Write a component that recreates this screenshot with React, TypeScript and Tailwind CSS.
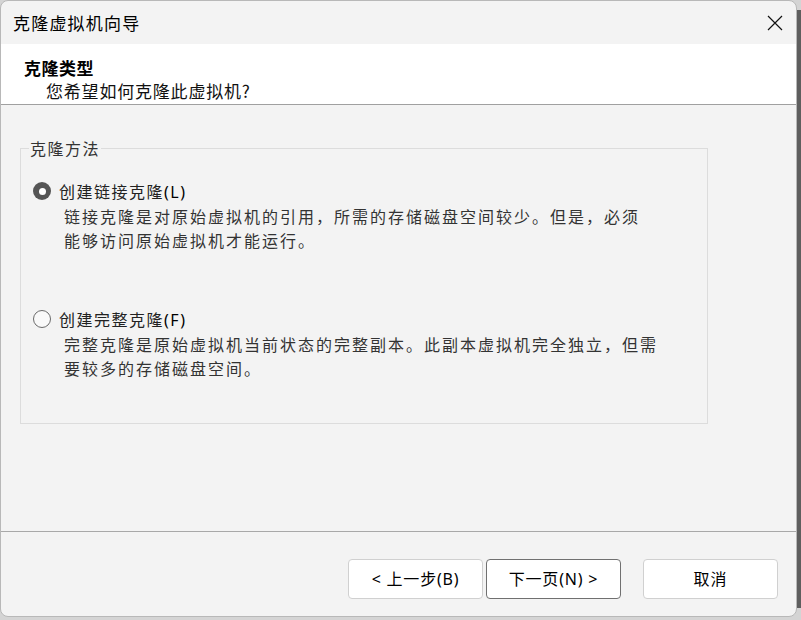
import React from "react";

const ui = { fontFamily: '"Noto Sans", "Noto Sans CJK SC", sans-serif' };
const cjk = { fontFamily: '"Noto Sans CJK SC", sans-serif' };

function Radio({ checked }: { checked: boolean }) {
  return checked ? (
    <span className="flex h-[18px] w-[18px] shrink-0 items-center justify-center rounded-full bg-[#555555]">
      <span className="h-[7px] w-[7px] rounded-full bg-white" />
    </span>
  ) : (
    <span className="h-[18px] w-[18px] shrink-0 rounded-full border border-[#6a6a6a] bg-[#f9f9f9]" />
  );
}

function Option({
  checked,
  label,
  hot,
  lines,
  className,
}: {
  checked: boolean;
  label: string;
  hot: string;
  lines: string[];
  className: string;
}) {
  return (
    <div className={className}>
      <div className="flex h-[24px] items-center gap-[8px]">
        <Radio checked={checked} />
        <span className="text-[16px] leading-[24px] tracking-[1.5px] text-[#222]" style={cjk}>
          {label}
          <span className="text-black" style={ui}>
            ({hot})
          </span>
        </span>
      </div>
      <div className="mt-[1px] pl-[31px] text-[16px] leading-[24px] tracking-[2px] text-[#333]" style={cjk}>
        {lines.map((l) => (
          <div key={l} className="whitespace-nowrap">
            {l}
          </div>
        ))}
      </div>
    </div>
  );
}

export default function App() {
  return (
    <div className="relative h-[620px] w-[801px] overflow-hidden bg-[#d4d4d4]">
      <div className="absolute right-0 top-[10px] h-[598px] w-[4px] bg-[#5e5e5e]" />
      <div className="relative flex h-[617px] w-[797px] flex-col overflow-hidden rounded-[8px] border border-[#b8b8b8] bg-[#f3f3f3]">
        {/* title bar */}
        <div className="flex h-[43px] shrink-0 items-center justify-between pl-[12px] pr-[13px]">
          <span className="text-[17px] tracking-[1.2px] text-black" style={cjk}>
            克隆虚拟机向导
          </span>
          <svg width="16" height="16" viewBox="0 0 16 16" fill="none" stroke="#111" strokeWidth="1.2">
            <path d="M1 1 L15 15 M15 1 L1 15" />
          </svg>
        </div>
        {/* header */}
        <div className="h-[61px] shrink-0 border-b border-[#a0a0a0] bg-white pt-[12px]" style={cjk}>
          <div className="pl-[23px] text-[17px] font-bold leading-[24px] tracking-[0.5px] text-black">克隆类型</div>
          <div className="pl-[45px] text-[17px] leading-[22px] tracking-[0.8px] text-[#111]">
            您希望如何克隆此虚拟机?
          </div>
        </div>
        {/* body */}
        <div className="h-[426px] shrink-0 pt-[33px]">
          <fieldset className="ml-[19px] h-[286px] w-[688px] border border-[#dcdcdc] px-[12px]">
            <legend
              className="ml-[-4px] px-[1px] text-[16px] leading-[20px] tracking-[1.5px] text-[#333]"
              style={cjk}
            >
              克隆方法
            </legend>
            <Option
              className="mt-[21px]"
              checked
              label="创建链接克隆"
              hot="L"
              lines={["链接克隆是对原始虚拟机的引用，所需的存储磁盘空间较少。但是，必须", "能够访问原始虚拟机才能运行。"]}
            />
            <Option
              className="mt-[55px]"
              checked={false}
              label="创建完整克隆"
              hot="F"
              lines={["完整克隆是原始虚拟机当前状态的完整副本。此副本虚拟机完全独立，但需", "要较多的存储磁盘空间。"]}
            />
          </fieldset>
        </div>
        {/* footer */}
        <div className="flex h-[85px] shrink-0 items-start justify-end border-t border-[#a8a8a8] pr-[18px] pt-[27px]" style={ui}>
          <button className="h-[40px] w-[135px] rounded-[4px] border border-[#d0d0d0] bg-white text-[16px] tracking-[0.8px] text-black">
            &lt; 上一步(B)
          </button>
          <button className="ml-[3px] h-[40px] w-[135px] rounded-[4px] border border-[#707070] bg-white text-[16px] tracking-[0.8px] text-black">
            下一页(N) &gt;
          </button>
          <button className="ml-[22px] h-[40px] w-[135px] rounded-[4px] border border-[#d0d0d0] bg-white text-[16px] tracking-[1px] text-black">
            取消
          </button>
        </div>
      </div>
    </div>
  );
}
